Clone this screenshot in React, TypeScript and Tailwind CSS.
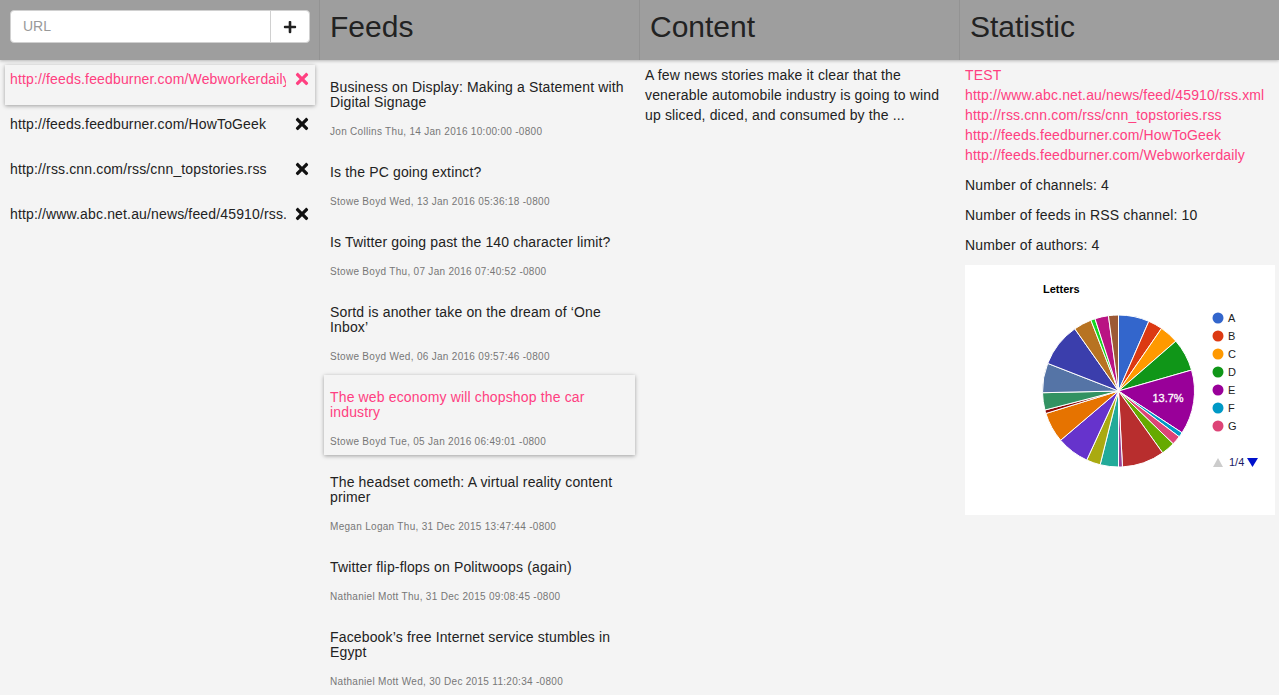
import React from "react";
import { FaPlus, FaTimes } from "react-icons/fa";

const FONT = { fontFamily: '"Liberation Sans", Arial, sans-serif' };

const channels = [
  "http://feeds.feedburner.com/Webworkerdaily",
  "http://feeds.feedburner.com/HowToGeek",
  "http://rss.cnn.com/rss/cnn_topstories.rss",
  "http://www.abc.net.au/news/feed/45910/rss.xml",
];

const feeds = [
  ["Business on Display: Making a Statement with Digital Signage", "Jon Collins Thu, 14 Jan 2016 10:00:00 -0800"],
  ["Is the PC going extinct?", "Stowe Boyd Wed, 13 Jan 2016 05:36:18 -0800"],
  ["Is Twitter going past the 140 character limit?", "Stowe Boyd Thu, 07 Jan 2016 07:40:52 -0800"],
  ["Sortd is another take on the dream of \u2018One Inbox\u2019", "Stowe Boyd Wed, 06 Jan 2016 09:57:46 -0800"],
  ["The web economy will chopshop the car industry", "Stowe Boyd Tue, 05 Jan 2016 06:49:01 -0800"],
  ["The headset cometh: A virtual reality content primer", "Megan Logan Thu, 31 Dec 2015 13:47:44 -0800"],
  ["Twitter flip-flops on Politwoops (again)", "Nathaniel Mott Thu, 31 Dec 2015 09:08:45 -0800"],
  ["Facebook\u2019s free Internet service stumbles in Egypt", "Nathaniel Mott Wed, 30 Dec 2015 11:20:34 -0800"],
  ["Microsoft ends support for older Internet Explorer", "Stowe Boyd Tue, 29 Dec 2015 08:12:10 -0800"],
];

const bounds = [0, 23.5, 34.5, 49, 74, 123.3, 127, 134, 144.5, 177, 180, 194, 204.7, 229.6, 252.8, 255.5, 268.7, 291.3, 324.9, 338.7, 342, 352.4, 360];
const colors = ["#3366cc", "#dc3912", "#ff9900", "#109618", "#990099", "#0099c6", "#dd4477", "#66aa00", "#b82e2e", "#994499", "#22aa99", "#aaaa11", "#6633cc", "#e67300", "#8b0707", "#329262", "#5574a6", "#3b3eac", "#b77322", "#16d620", "#b91383", "#9c5935"];

function PieChart() {
  const cx = 153.5, cy = 126, r = 76;
  const pt = (a: number) => {
    const rad = ((a - 90) * Math.PI) / 180;
    return [cx + r * Math.cos(rad), cy + r * Math.sin(rad)];
  };
  const legend = ["A", "B", "C", "D", "E", "F", "G"];
  return (
    <svg width="310" height="250" viewBox="0 0 310 250" style={{ fontFamily: '"Liberation Sans", Arial, sans-serif' }}>
      <text x="78" y="28" fontSize="11" fontWeight="bold" fill="#000">Letters</text>
      {colors.map((c, i) => {
        const a0 = bounds[i], a1 = bounds[i + 1];
        const [x0, y0] = pt(a0);
        const [x1, y1] = pt(a1);
        const large = a1 - a0 > 180 ? 1 : 0;
        return (
          <path key={i} d={`M${cx} ${cy} L${x0} ${y0} A${r} ${r} 0 ${large} 1 ${x1} ${y1} Z`} fill={c} stroke="#fff" strokeWidth="1" />
        );
      })}
      <text x="203" y="137" fontSize="11" fill="#fff" textAnchor="middle" stroke="#fff" strokeWidth="0.3">13.7%</text>
      {legend.map((l, i) => (
        <g key={l}>
          <circle cx="253" cy={53 + i * 18} r="5.5" fill={colors[i]} />
          <text x="263" y={57 + i * 18} fontSize="11" fill="#222">{l}</text>
        </g>
      ))}
      <path d="M248 202 L253 193 L258 202 Z" fill="#ccc" />
      <text x="264" y="201" fontSize="11" fill="#1a1a66">1/4</text>
      <path d="M282 193 L293 193 L287.5 202 Z" fill="#0011cc" />
    </svg>
  );
}

export default function App() {
  return (
    <div className="h-screen w-full overflow-hidden bg-[#f4f4f4] flex flex-col text-[#222]" style={FONT}>
      <div className="relative z-10 flex h-[60px] shrink-0 bg-[#9e9e9e] shadow-[0_1px_3px_rgba(0,0,0,0.25)]">
        <div className="w-[320px] shrink-0 border-r border-[#939393]">
          <div className="mt-[10px] ml-[10px] flex h-[33px] w-[300px] overflow-hidden rounded-[4px] border border-[#d0d0d0] bg-white">
            <input
              className="min-w-0 flex-1 pl-[12px] text-[14px] text-[#222] outline-none placeholder:text-[#999]"
              placeholder="URL"
              style={FONT}
            />
            <button className="flex w-[39px] items-center justify-center border-l border-[#d0d0d0] text-[#222]">
              <FaPlus size={14} />
            </button>
          </div>
        </div>
        {["Feeds", "Content", "Statistic"].map((t, i) => (
          <div key={t} className={i < 2 ? "w-[320px] shrink-0 border-r border-[#939393]" : "flex-1"}>
            <h2 className="pl-[10px] pt-[9px] text-[30px] leading-[36px] text-[#222]">{t}</h2>
          </div>
        ))}
      </div>

      <div className="flex flex-1 min-h-0 tracking-[0.15px]">
        {/* Channels */}
        <div className="w-[320px] shrink-0 pt-[5px]">
          {channels.map((c, i) => {
            const sel = i === 0;
            return (
              <div
                key={c}
                className={`mx-[5px] mb-[5px] flex h-[40px] items-start px-[5px] pt-[6px] ${sel ? "shadow-[0_1px_4px_rgba(0,0,0,0.35)]" : ""}`}
              >
                <div className={`w-[277px] overflow-hidden whitespace-nowrap text-[14px] leading-[16px] ${sel ? "text-[#ff4081]" : "text-[#222]"}`}>
                  {c}
                </div>
                <div className={`ml-[8px] -mt-[1px] flex h-[18px] w-[16px] items-center justify-center ${sel ? "text-[#ff4081]" : "text-[#111]"}`}>
                  <FaTimes size={18} />
                </div>
              </div>
            );
          })}
        </div>

        {/* Feeds */}
        <div className="w-[320px] shrink-0 pt-[5px]">
          {feeds.map(([title, meta], i) => {
            const sel = i === 4;
            return (
              <div
                key={title}
                className={`mx-[4px] mb-[5px] w-[311px] px-[6px] pt-[15px] pb-[7px] ${sel ? "shadow-[0_1px_4px_rgba(0,0,0,0.35)]" : ""}`}
              >
                <div className={`text-[14px] leading-[15px] ${sel ? "text-[#ff4081]" : "text-[#222]"}`}>{title}</div>
                <div className="mt-[16px] text-[10px] leading-[12px] tracking-[0.3px] text-[#777]">{meta}</div>
              </div>
            );
          })}
        </div>

        {/* Content */}
        <div className="w-[320px] shrink-0 px-[5px] pt-[5px]">
          <p className="text-[14px] leading-[20px] text-[#222]">
            A few news stories make it clear that the venerable automobile industry is going to wind up sliced, diced, and consumed by the ...
          </p>
        </div>

        {/* Statistic */}
        <div className="flex-1 px-[5px] pt-[5px]">
          <div className="text-[14px] leading-[20px] text-[#ff4081]">
            <div>TEST</div>
            <div>http://www.abc.net.au/news/feed/45910/rss.xml</div>
            <div>http://rss.cnn.com/rss/cnn_topstories.rss</div>
            <div>http://feeds.feedburner.com/HowToGeek</div>
            <div>http://feeds.feedburner.com/Webworkerdaily</div>
          </div>
          <p className="mt-[10px] text-[14px] leading-[20px]">Number of channels: 4</p>
          <p className="mt-[10px] text-[14px] leading-[20px]">Number of feeds in RSS channel: 10</p>
          <p className="mt-[10px] text-[14px] leading-[20px]">Number of authors: 4</p>
          <div className="mt-[10px] h-[250px] w-[310px] bg-white tracking-normal">
            <PieChart />
          </div>
        </div>
      </div>
    </div>
  );
}
